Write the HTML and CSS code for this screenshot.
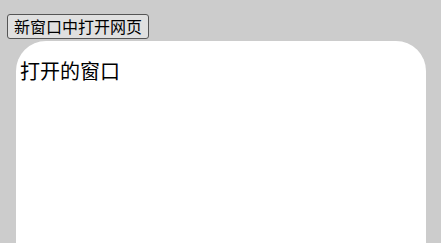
FILE: index.html
```html
<!DOCTYPE html>
<html lang="zh">
<head>
<meta charset="utf-8">
<link rel="stylesheet" href="styles.css">
</head>
<body>
<div class="bar"><button class="open-btn" type="button">新窗口中打开网页</button></div>
<div class="window">
  <div class="title">打开的窗口</div>
</div>
</body>
</html>
```
FILE: styles.css
```css
html, body {
  margin: 0;
  height: 100%;
  overflow: hidden;
}
body {
  background: #cccccc;
  font-family: "Noto Sans CJK SC", "Noto Sans", sans-serif;
  color: #000;
}
.bar {
  padding: 14px 0 0 7px;
  height: 27px;
}
.open-btn {
  font-family: "Noto Sans CJK SC", "Noto Sans", sans-serif;
  font-size: 16px;
  line-height: 23px;
  height: 25px;
  padding: 0 6px;
  margin: 0;
  background: #e0e0e0;
  border: 1px solid #555555;
  border-radius: 3px;
  color: #000;
  display: block;
}
.window {
  margin-left: 16px;
  width: 410px;
  height: 202px;
  background: #fff;
  border-radius: 30px 30px 0 0;
  box-sizing: border-box;
  padding: 15px 4px;
}
.title {
  font-size: 20px;
  line-height: 29px;
}
```
